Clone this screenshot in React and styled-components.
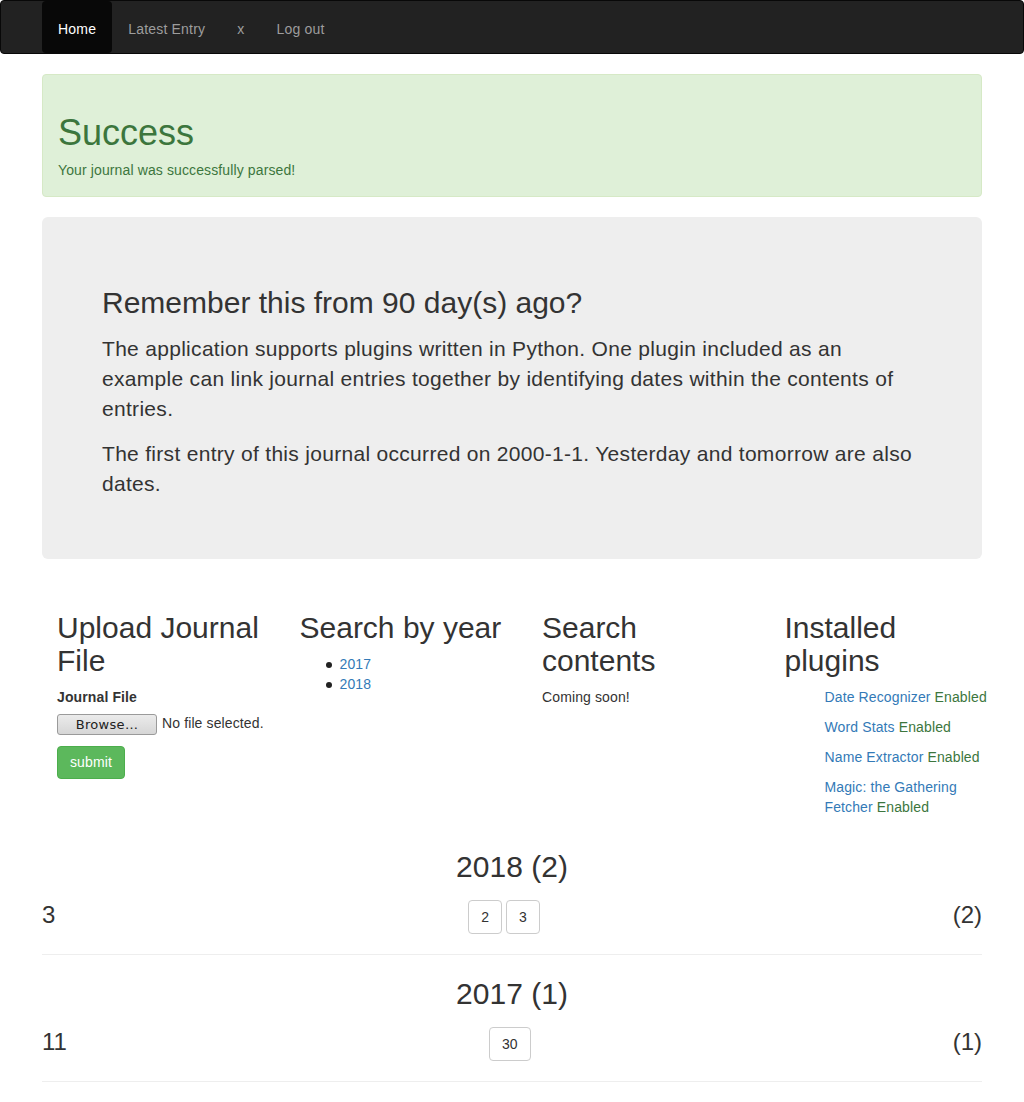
import React from "react";
import styled, { createGlobalStyle } from "styled-components";

const GlobalStyle = createGlobalStyle`
  html, body {
    margin: 0;
    padding: 0;
    background: #fff;
  }
  body {
    font-family: "Liberation Sans", Arial, Helvetica, sans-serif;
    font-size: 14px;
    line-height: 1.42857;
    letter-spacing: 0.12px;
    color: #333;
  }
  * {
    box-sizing: border-box;
  }
`;

const Navbar = styled.nav`
  height: 54px;
  background: #222;
  border: 1px solid #080808;
  border-radius: 4px;
  margin-bottom: 20px;
`;

const Container = styled.div`
  width: 970px;
  margin: 0 auto;
  padding: 0 15px;
`;

const NavList = styled.ul`
  display: flex;
  margin: 0;
  padding: 0;
  list-style: none;
`;

const NavLink = styled.a`
  display: block;
  height: 52px;
  padding: 18px 16px 0;
  line-height: 20px;
  font-size: 14px;
  letter-spacing: 0.2px;
  text-decoration: none;
  color: ${props => (props.$active ? "#fff" : "#9d9d9d")};
  background: ${props => (props.$active ? "#080808" : "transparent")};
  border-radius: ${props => (props.$active ? "4px" : "0")};
`;

const Alert = styled.div`
  padding: 15px;
  background: #dff0d8;
  border: 1px solid #d6e9c6;
  border-radius: 4px;
  color: #3c763d;
  margin-bottom: 20px;
  h1 {
    margin: 23px 0 8px;
    font-size: 36px;
    font-weight: 500;
    line-height: 1.1;
    letter-spacing: 0;
  }
  p {
    margin: 0;
  }
`;

const Jumbotron = styled.div`
  background: #eee;
  border-radius: 6px;
  padding: 48px 60px;
  margin-bottom: 30px;
  h2 {
    margin: 21px 0 15px;
    font-size: 30px;
    font-weight: 500;
    line-height: 1.1;
    letter-spacing: 0;
  }
  p {
    margin: 0 0 15px;
    font-size: 21px;
    font-weight: 200;
    line-height: 30px;
    letter-spacing: 0.3px;
  }
  p:last-child {
    margin-bottom: 12px;
  }
`;

const Columns = styled.div`
  display: grid;
  grid-template-columns: repeat(4, 242.5px);
  width: 970px;
`;

const Column = styled.div`
  padding: 0 15px;
`;

const ColTitle = styled.h2`
  margin: 22px 0 11px;
  font-size: 30px;
  font-weight: 500;
  line-height: 1.1;
  letter-spacing: 0;
`;

const Label = styled.label`
  display: block;
  font-weight: 700;
  margin-bottom: 6px;
`;

const FileRow = styled.div`
  display: flex;
  align-items: center;
  gap: 5px;
  margin-bottom: 11px;
`;

const BrowseButton = styled.span`
  display: inline-block;
  width: 100px;
  height: 21px;
  line-height: 19px;
  text-align: center;
  font-family: "DejaVu Sans", "Liberation Sans", sans-serif;
  font-size: 13px;
  letter-spacing: 0.3px;
  color: #222;
  border: 1px solid #9a9a9a;
  border-radius: 3px;
  background: linear-gradient(#ebebeb, #d6d6d6);
`;

const SubmitButton = styled.button`
  height: 33px;
  padding: 0 12px;
  font-family: inherit;
  font-size: 14px;
  letter-spacing: 0.12px;
  color: #fff;
  background: #5cb85c;
  border: 1px solid #4cae4c;
  border-radius: 4px;
`;

const YearList = styled.ul`
  margin: 0;
  padding-left: 40px;
  list-style: none;
  li {
    position: relative;
  }
  li::before {
    content: "";
    position: absolute;
    left: -14px;
    top: 7px;
    width: 6px;
    height: 6px;
    border-radius: 50%;
    background: #222;
  }
`;

const Link = styled.a`
  color: #337ab7;
  text-decoration: none;
`;

const PluginList = styled.ul`
  margin: 0;
  padding-left: 40px;
  list-style: none;
  li {
    margin-bottom: 10px;
  }
`;

const Enabled = styled.span`
  color: #3c763d;
`;

const Text = styled.p`
  margin: 0;
`;

const YearSection = styled.section`
  margin-top: ${props => (props.$first ? "16px" : "0")};
`;

const YearTitle = styled.h2`
  margin: 22px 0 0;
  text-align: center;
  font-size: 30px;
  font-weight: 500;
  line-height: 1.1;
  letter-spacing: 0;
`;

const MonthRow = styled.div`
  display: flex;
  justify-content: space-between;
  align-items: flex-start;
`;

const MonthLabel = styled.h3`
  margin: 19px 0 0;
  font-size: 24px;
  font-weight: 500;
  line-height: 1.1;
  letter-spacing: 0;
`;

const DayButtons = styled.div`
  display: flex;
  gap: 4px;
  margin-top: 17px;
`;

const DayButton = styled.button`
  height: 34px;
  padding: 0 12px;
  font-family: inherit;
  font-size: 14px;
  color: #333;
  background: #fff;
  border: 1px solid #ccc;
  border-radius: 4px;
`;

const Rule = styled.hr`
  margin: 20px 0 0;
  border: 0;
  border-top: 1px solid #eee;
`;

const plugins = [
  "Date Recognizer",
  "Word Stats",
  "Name Extractor",
  "Magic: the Gathering Fetcher",
];

const years = [
  { year: 2018, count: 2, month: 3, days: [2, 3] },
  { year: 2017, count: 1, month: 11, days: [30] },
];

const App = () => {
  return (
    <>
      <GlobalStyle />
      <Navbar>
        <Container>
          <NavList>
            <li><NavLink $active href="#">Home</NavLink></li>
            <li><NavLink href="#">Latest Entry</NavLink></li>
            <li><NavLink href="#">x</NavLink></li>
            <li><NavLink href="#">Log out</NavLink></li>
          </NavList>
        </Container>
      </Navbar>
      <Container>
        <Alert>
          <h1>Success</h1>
          <p>Your journal was successfully parsed!</p>
        </Alert>
        <Jumbotron>
          <h2>Remember this from 90 day(s) ago?</h2>
          <p>
            The application supports plugins written in Python. One plugin
            included as an example can link journal entries together by
            identifying dates within the contents of entries.
          </p>
          <p>
            The first entry of this journal occurred on 2000-1-1. Yesterday and
            tomorrow are also dates.
          </p>
        </Jumbotron>

        <Columns>
          <Column>
            <ColTitle>Upload Journal File</ColTitle>
            <Label>Journal File</Label>
            <FileRow>
              <BrowseButton>Browse…</BrowseButton>
              <span>No file selected.</span>
            </FileRow>
            <SubmitButton>submit</SubmitButton>
          </Column>
          <Column>
            <ColTitle>Search by year</ColTitle>
            <YearList>
              <li><Link href="#">2017</Link></li>
              <li><Link href="#">2018</Link></li>
            </YearList>
          </Column>
          <Column>
            <ColTitle>Search contents</ColTitle>
            <Text>Coming soon!</Text>
          </Column>
          <Column>
            <ColTitle>Installed plugins</ColTitle>
            <PluginList>
              {plugins.map(name => (
                <li key={name}>
                  <Link href="#">{name}</Link> <Enabled>Enabled</Enabled>
                </li>
              ))}
            </PluginList>
          </Column>
        </Columns>

        {years.map((y, i) => (
          <YearSection key={y.year} $first={i === 0}>
            <YearTitle>{y.year} ({y.count})</YearTitle>
            <MonthRow>
              <MonthLabel>{y.month}</MonthLabel>
              <DayButtons>
                {y.days.map(d => (
                  <DayButton key={d}>{d}</DayButton>
                ))}
              </DayButtons>
              <MonthLabel>({y.count})</MonthLabel>
            </MonthRow>
            <Rule />
          </YearSection>
        ))}
      </Container>
    </>
  );
};

export default App;
